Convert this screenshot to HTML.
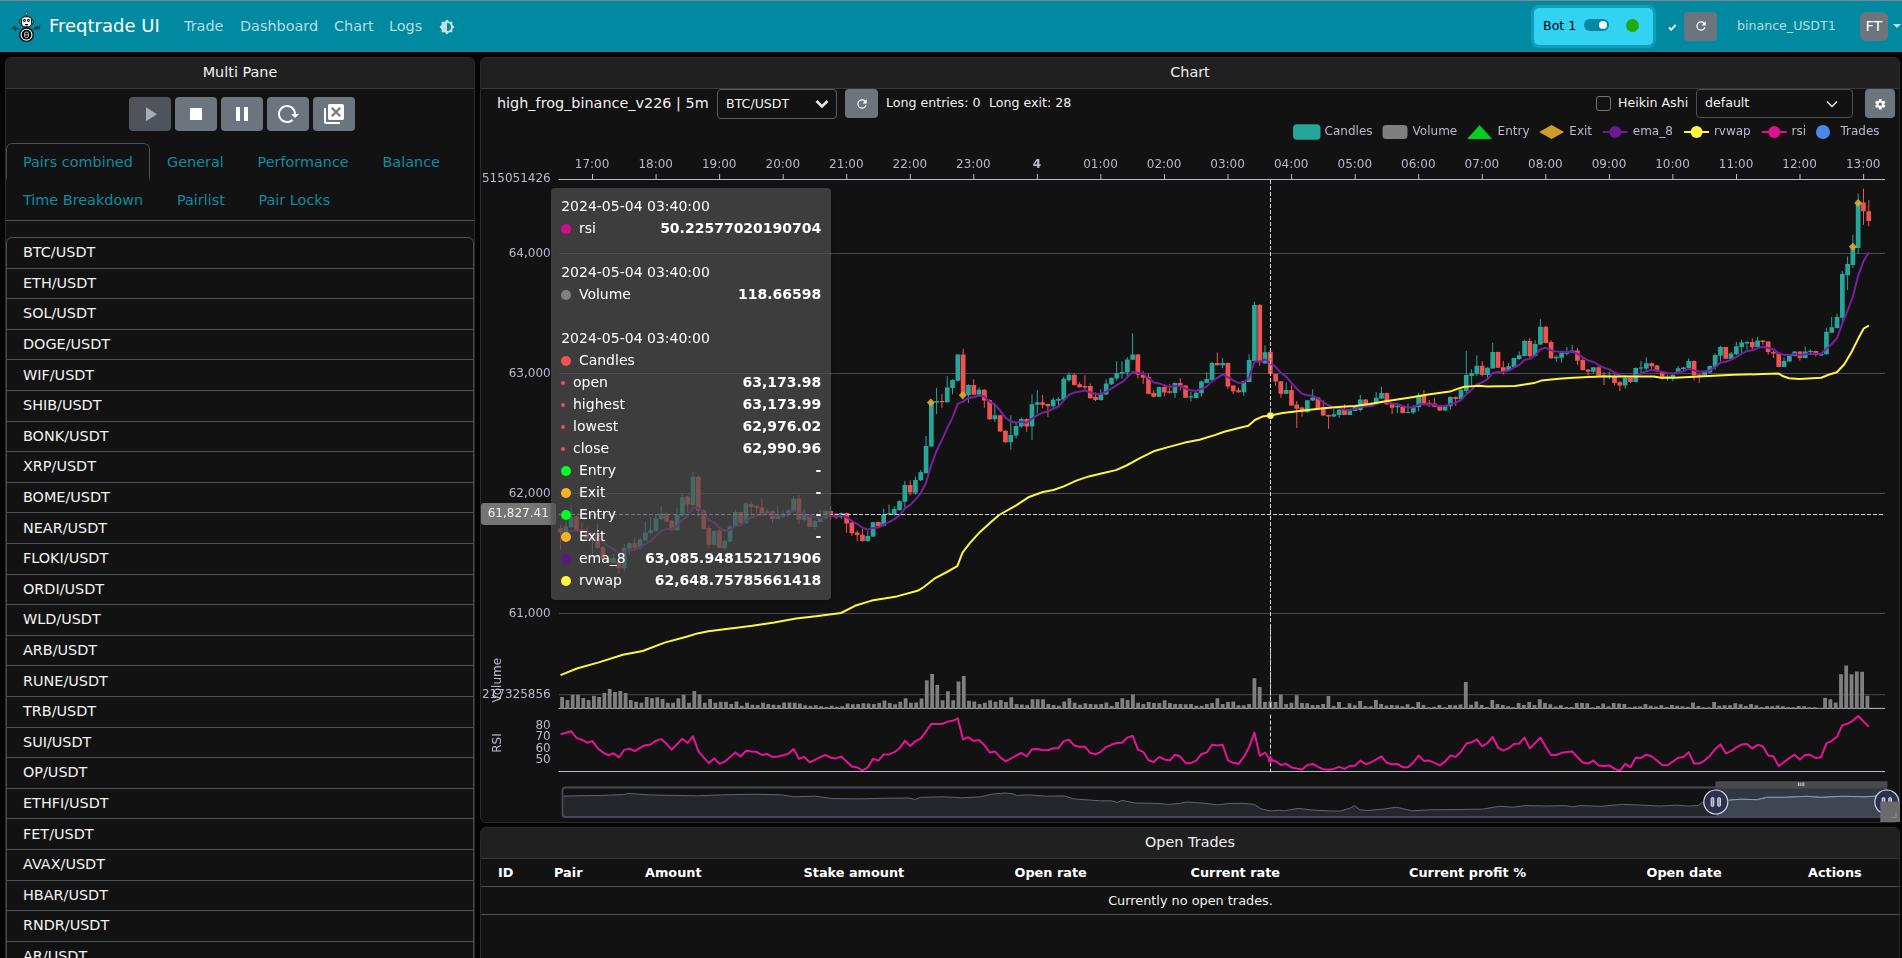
<!DOCTYPE html>
<html lang="en">
<head>
<meta charset="utf-8">
<title>freqUI</title>
<style>
*{box-sizing:border-box}
html,body{margin:0;padding:0}
body{width:1902px;height:958px;overflow:hidden;background:#050505;color:#f8f9fa;font-family:"DejaVu Sans","Liberation Sans",sans-serif;font-size:14.4px;line-height:1;position:relative}
.topline{position:absolute;left:0;top:0;width:1902px;height:1px;background:#848484}
.nav{position:absolute;left:0;top:1px;width:1902px;height:51px;background:#0089a1}
.t{position:absolute;white-space:nowrap;line-height:1}
.card{position:absolute;background:#121212;border:1px solid #2a2a2a;border-radius:6px;overflow:hidden}
.card .hd{position:absolute;left:0;top:0;right:0;height:31px;background:#202020;border-bottom:1px solid #3a3a3a}
</style>
</head>
<body>
<div class="topline"></div><div class="nav"></div>
<svg style="position:absolute;left:8px;top:8px" width="36" height="40" viewBox="8 8 36 40">
<g fill="none" stroke="#000" stroke-width="0.75" stroke-linecap="round" stroke-linejoin="round">
<path d="M12.3 28.3h1.3l.9-2.2.9 4.6 1.1-2.9.7.9h1.7"/>
<path d="M33.3 29.3h1.4l.8-2.3 1 2.1.9-3 1 3.3 1.1-.7.2-3"/>
</g>
<line x1="26.5" y1="14.6" x2="26.5" y2="17" stroke="#000" stroke-width="1"/>
<circle cx="26.5" cy="13.5" r="1.3" fill="#fff" stroke="#000" stroke-width="0.8"/>
<rect x="19.6" y="19.8" width="2.6" height="4" rx="0.9" fill="#8c8c8c" stroke="#000" stroke-width="0.7"/>
<rect x="30.8" y="19.8" width="2.6" height="4" rx="0.9" fill="#8c8c8c" stroke="#000" stroke-width="0.7"/>
<rect x="21.4" y="16.8" width="10.2" height="10" rx="3.3" fill="#fff" stroke="#000" stroke-width="1"/>
<circle cx="24.5" cy="20.5" r="1.4" fill="#000"/><circle cx="28.4" cy="20.5" r="1.4" fill="#000"/>
<circle cx="24.5" cy="20.5" r="0.55" fill="#ddd"/><circle cx="28.4" cy="20.5" r="0.55" fill="#ddd"/>
<path d="M24.6 24h3.8q-.4 1.5-1.9 1.5t-1.9-1.5z" fill="#000"/>
<circle cx="26.5" cy="34.7" r="6.7" fill="#fff" stroke="#000" stroke-width="1.3"/>
<circle cx="26.5" cy="34.7" r="4.9" fill="#000"/>
<rect x="24.7" y="32.1" width="3.6" height="5.3" rx="1" fill="none" stroke="#e8e8e8" stroke-width="0.9"/>
<line x1="24.7" y1="34.8" x2="28.3" y2="34.8" stroke="#e8e8e8" stroke-width="0.8"/>
</svg>
<span class="t" style="left:49.00px;top:17.27px;font-size:18px;color:#fff;">Freqtrade UI</span>
<span class="t" style="left:184.00px;top:18.82px;font-size:14.4px;color:rgba(255,255,255,.72);">Trade</span>
<span class="t" style="left:240.00px;top:18.82px;font-size:14.4px;color:rgba(255,255,255,.72);">Dashboard</span>
<span class="t" style="left:334.00px;top:18.82px;font-size:14.4px;color:rgba(255,255,255,.72);">Chart</span>
<span class="t" style="left:389.00px;top:18.82px;font-size:14.4px;color:rgba(255,255,255,.72);">Logs</span>
<svg style="position:absolute;left:439px;top:18.5px" width="16" height="16" viewBox="0 0 24 24"><path fill="rgba(255,255,255,.75)" d="M12,18V6A6,6 0 0,1 18,12A6,6 0 0,1 12,18M20,15.31L23.31,12L20,8.69V4H15.31L12,0.69L8.69,4H4V8.69L0.69,12L4,15.31V20H8.69L12,23.31L15.31,20H20V15.31Z"/></svg>
<div style="position:absolute;left:1534px;top:8px;width:119px;height:37px;border-radius:5px;background:#31d2f2;box-shadow:0 0 0 3px #0d9ebb"></div>
<span class="t" style="left:1543.00px;top:20.34px;font-size:12.6px;color:#000;">Bot 1</span>
<div style="position:absolute;left:1584px;top:18.5px;width:25px;height:12.6px;border-radius:7px;background:#0089a1"></div>
<div style="position:absolute;left:1598.5px;top:20.5px;width:8.6px;height:8.6px;border-radius:5px;background:#fff"></div>
<div style="position:absolute;left:1625.5px;top:18.5px;width:13px;height:13px;border-radius:7px;background:#1eab0b"></div>
<svg style="position:absolute;left:1667px;top:22px" width="10.5" height="10.5" viewBox="0 0 12 12"><path d="M2.3 6.3l2.6 2.6 5-5.6" fill="none" stroke="#fff" stroke-width="2.1"/></svg>
<div style="position:absolute;left:1684px;top:12px;width:33px;height:29px;border-radius:4px;background:#6c757d"></div>
<svg style="position:absolute;left:1693.5px;top:19px" width="14" height="14" viewBox="0 0 24 24"><path fill="#fff" d="M17.65,6.35C16.2,4.9 14.21,4 12,4A8,8 0 0,0 4,12A8,8 0 0,0 12,20C15.73,20 18.84,17.45 19.73,14H17.65C16.83,16.33 14.61,18 12,18A6,6 0 0,1 6,12A6,6 0 0,1 12,6C13.66,6 15.14,6.69 16.22,7.78L13,11H20V4L17.65,6.35Z"/></svg>
<span class="t" style="left:1737.00px;top:19.74px;font-size:12.6px;color:rgba(255,255,255,.72);">binance_USDT1</span>
<div style="position:absolute;left:1860px;top:12px;width:28px;height:29px;border-radius:6px;background:#6c757d"></div>
<span class="t" style="left:1374.00px;width:1000px;text-align:center;top:18.82px;font-size:14.4px;color:#fff;">FT</span>
<div style="position:absolute;left:1893px;top:24px;width:0;height:0;border-left:4px solid transparent;border-right:4px solid transparent;border-top:4px solid rgba(255,255,255,.75)"></div>
<div class="card" style="left:5px;top:57px;width:470px;height:920px;"><div class="hd"></div></div>
<span class="t" style="left:-260.00px;width:1000px;text-align:center;top:65.02px;font-size:14.4px;color:#f1f1f1;">Multi Pane</span>
<div class="card" style="left:480px;top:57px;width:1420px;height:766px;"><div class="hd"></div></div>
<span class="t" style="left:690.00px;width:1000px;text-align:center;top:65.02px;font-size:14.4px;color:#f1f1f1;">Chart</span>
<div class="card" style="left:480px;top:827px;width:1420px;height:150px;"><div class="hd"></div></div>
<span class="t" style="left:690.00px;width:1000px;text-align:center;top:835.02px;font-size:14.4px;color:#f1f1f1;">Open Trades</span>
<div style="position:absolute;left:129px;top:97px;width:42px;height:34px;border-radius:4px;background:#4e545b"></div>
<svg style="position:absolute;left:138px;top:102px" width="24" height="24" viewBox="0 0 24 24"><path fill="#a9acb0" d="M8,5.14V19.14L19,12.14L8,5.14Z"/></svg>
<div style="position:absolute;left:175px;top:97px;width:42px;height:34px;border-radius:4px;background:#6c757d"></div>
<svg style="position:absolute;left:184px;top:102px" width="24" height="24" viewBox="0 0 24 24"><path fill="#fff" d="M18,18H6V6H18V18Z"/></svg>
<div style="position:absolute;left:221px;top:97px;width:42px;height:34px;border-radius:4px;background:#6c757d"></div>
<svg style="position:absolute;left:230px;top:102px" width="24" height="24" viewBox="0 0 24 24"><path fill="#fff" d="M14,19H18V5H14M6,19H10V5H6V19Z"/></svg>
<div style="position:absolute;left:267px;top:97px;width:42px;height:34px;border-radius:4px;background:#6c757d"></div>
<svg style="position:absolute;left:276px;top:102px" width="24" height="24" viewBox="0 0 24 24"><path fill="#fff" d="M2 12C2 16.97 6.03 21 11 21C13.39 21 15.68 20.06 17.4 18.4L15.9 16.9C14.63 18.25 12.86 19 11 19C4.76 19 1.64 11.46 6.05 7.05C10.46 2.64 18 5.77 18 12H15L19 16H19.1L23 12H20C20 7.03 15.97 3 11 3C6.03 3 2 7.03 2 12Z"/></svg>
<div style="position:absolute;left:313px;top:97px;width:42px;height:34px;border-radius:4px;background:#6c757d"></div>
<svg style="position:absolute;left:322px;top:102px" width="24" height="24" viewBox="0 0 24 24"><path fill="#fff" d="M4 20H18V22H4C2.9 22 2 21.11 2 20V6H4V20M20.22 2H7.78C6.8 2 6 2.8 6 3.78V16.22C6 17.2 6.8 18 7.78 18H20.22C21.2 18 22 17.2 22 16.22V3.78C22 2.8 21.2 2 20.22 2M19 13.6L17.6 15L14 11.4L10.4 15L9 13.6L12.6 10L9 6.4L10.4 5L14 8.6L17.6 5L19 6.4L15.4 10L19 13.6Z"/></svg>
<div style="position:absolute;left:6px;top:143px;width:144px;height:39px;border:1px solid #495057;border-bottom:none;border-radius:6px 6px 0 0;-webkit-mask-image:linear-gradient(#000 80%,transparent);mask-image:linear-gradient(#000 85%,transparent)"></div>
<div style="position:absolute;left:6px;top:220px;width:468px;height:1px;background:#495057"></div>
<span class="t" style="left:23.00px;top:155.02px;font-size:14.4px;color:#0b8ca4;">Pairs combined</span>
<span class="t" style="left:167.00px;top:155.02px;font-size:14.4px;color:#0b8ca4;">General</span>
<span class="t" style="left:257.50px;top:155.02px;font-size:14.4px;color:#0b8ca4;">Performance</span>
<span class="t" style="left:382.50px;top:155.02px;font-size:14.4px;color:#0b8ca4;">Balance</span>
<span class="t" style="left:23.00px;top:192.62px;font-size:14.4px;color:#0b8ca4;">Time Breakdown</span>
<span class="t" style="left:177.00px;top:192.62px;font-size:14.4px;color:#0b8ca4;">Pairlist</span>
<span class="t" style="left:258.50px;top:192.62px;font-size:14.4px;color:#0b8ca4;">Pair Locks</span>
<div style="position:absolute;left:6px;top:237px;width:468px;height:760px;border:1px solid #495057;border-radius:6px 6px 0 0"></div>
<span class="t" style="left:23.00px;top:245.12px;font-size:14.4px;color:#f4f4f4;">BTC/USDT</span>
<div style="position:absolute;left:7px;top:267.6px;width:466px;height:1px;background:#495057"></div>
<span class="t" style="left:23.00px;top:275.72px;font-size:14.4px;color:#f4f4f4;">ETH/USDT</span>
<div style="position:absolute;left:7px;top:298.2px;width:466px;height:1px;background:#495057"></div>
<span class="t" style="left:23.00px;top:306.32px;font-size:14.4px;color:#f4f4f4;">SOL/USDT</span>
<div style="position:absolute;left:7px;top:328.8px;width:466px;height:1px;background:#495057"></div>
<span class="t" style="left:23.00px;top:336.92px;font-size:14.4px;color:#f4f4f4;">DOGE/USDT</span>
<div style="position:absolute;left:7px;top:359.4px;width:466px;height:1px;background:#495057"></div>
<span class="t" style="left:23.00px;top:367.52px;font-size:14.4px;color:#f4f4f4;">WIF/USDT</span>
<div style="position:absolute;left:7px;top:390.0px;width:466px;height:1px;background:#495057"></div>
<span class="t" style="left:23.00px;top:398.12px;font-size:14.4px;color:#f4f4f4;">SHIB/USDT</span>
<div style="position:absolute;left:7px;top:420.6px;width:466px;height:1px;background:#495057"></div>
<span class="t" style="left:23.00px;top:428.72px;font-size:14.4px;color:#f4f4f4;">BONK/USDT</span>
<div style="position:absolute;left:7px;top:451.2px;width:466px;height:1px;background:#495057"></div>
<span class="t" style="left:23.00px;top:459.32px;font-size:14.4px;color:#f4f4f4;">XRP/USDT</span>
<div style="position:absolute;left:7px;top:481.8px;width:466px;height:1px;background:#495057"></div>
<span class="t" style="left:23.00px;top:489.92px;font-size:14.4px;color:#f4f4f4;">BOME/USDT</span>
<div style="position:absolute;left:7px;top:512.4px;width:466px;height:1px;background:#495057"></div>
<span class="t" style="left:23.00px;top:520.52px;font-size:14.4px;color:#f4f4f4;">NEAR/USDT</span>
<div style="position:absolute;left:7px;top:543.0px;width:466px;height:1px;background:#495057"></div>
<span class="t" style="left:23.00px;top:551.12px;font-size:14.4px;color:#f4f4f4;">FLOKI/USDT</span>
<div style="position:absolute;left:7px;top:573.6px;width:466px;height:1px;background:#495057"></div>
<span class="t" style="left:23.00px;top:581.72px;font-size:14.4px;color:#f4f4f4;">ORDI/USDT</span>
<div style="position:absolute;left:7px;top:604.2px;width:466px;height:1px;background:#495057"></div>
<span class="t" style="left:23.00px;top:612.32px;font-size:14.4px;color:#f4f4f4;">WLD/USDT</span>
<div style="position:absolute;left:7px;top:634.8px;width:466px;height:1px;background:#495057"></div>
<span class="t" style="left:23.00px;top:642.92px;font-size:14.4px;color:#f4f4f4;">ARB/USDT</span>
<div style="position:absolute;left:7px;top:665.4px;width:466px;height:1px;background:#495057"></div>
<span class="t" style="left:23.00px;top:673.52px;font-size:14.4px;color:#f4f4f4;">RUNE/USDT</span>
<div style="position:absolute;left:7px;top:696.0px;width:466px;height:1px;background:#495057"></div>
<span class="t" style="left:23.00px;top:704.12px;font-size:14.4px;color:#f4f4f4;">TRB/USDT</span>
<div style="position:absolute;left:7px;top:726.6px;width:466px;height:1px;background:#495057"></div>
<span class="t" style="left:23.00px;top:734.72px;font-size:14.4px;color:#f4f4f4;">SUI/USDT</span>
<div style="position:absolute;left:7px;top:757.2px;width:466px;height:1px;background:#495057"></div>
<span class="t" style="left:23.00px;top:765.32px;font-size:14.4px;color:#f4f4f4;">OP/USDT</span>
<div style="position:absolute;left:7px;top:787.8px;width:466px;height:1px;background:#495057"></div>
<span class="t" style="left:23.00px;top:795.92px;font-size:14.4px;color:#f4f4f4;">ETHFI/USDT</span>
<div style="position:absolute;left:7px;top:818.4px;width:466px;height:1px;background:#495057"></div>
<span class="t" style="left:23.00px;top:826.52px;font-size:14.4px;color:#f4f4f4;">FET/USDT</span>
<div style="position:absolute;left:7px;top:849.0px;width:466px;height:1px;background:#495057"></div>
<span class="t" style="left:23.00px;top:857.12px;font-size:14.4px;color:#f4f4f4;">AVAX/USDT</span>
<div style="position:absolute;left:7px;top:879.6px;width:466px;height:1px;background:#495057"></div>
<span class="t" style="left:23.00px;top:887.72px;font-size:14.4px;color:#f4f4f4;">HBAR/USDT</span>
<div style="position:absolute;left:7px;top:910.2px;width:466px;height:1px;background:#495057"></div>
<span class="t" style="left:23.00px;top:918.32px;font-size:14.4px;color:#f4f4f4;">RNDR/USDT</span>
<div style="position:absolute;left:7px;top:940.8px;width:466px;height:1px;background:#495057"></div>
<span class="t" style="left:23.00px;top:948.92px;font-size:14.4px;color:#f4f4f4;">AR/USDT</span>
<span class="t" style="left:497.00px;top:95.82px;font-size:14.4px;color:#f1f1f1;">high_frog_binance_v226 | 5m</span>
<div style="position:absolute;left:717px;top:89px;width:120px;height:30px;border:1px solid #5a5f64;border-radius:4px;background:#121212"></div>
<span class="t" style="left:726.00px;top:97.94px;font-size:12.6px;color:#f1f1f1;">BTC/USDT</span>
<svg style="position:absolute;left:814px;top:97px" width="16" height="14" viewBox="0 0 16 14"><path d="M2.5 4l5.5 5.5L13.5 4" fill="none" stroke="#e8e8e8" stroke-width="2.6"/></svg>
<div style="position:absolute;left:845px;top:89px;width:33px;height:29px;border-radius:4px;background:#6c757d"></div>
<svg style="position:absolute;left:854.5px;top:96.5px" width="14" height="14" viewBox="0 0 24 24"><path fill="#fff" d="M17.65,6.35C16.2,4.9 14.21,4 12,4A8,8 0 0,0 4,12A8,8 0 0,0 12,20C15.73,20 18.84,17.45 19.73,14H17.65C16.83,16.33 14.61,18 12,18A6,6 0 0,1 6,12A6,6 0 0,1 12,6C13.66,6 15.14,6.69 16.22,7.78L13,11H20V4L17.65,6.35Z"/></svg>
<span class="t" style="left:886.00px;top:97.24px;font-size:12.6px;color:#f1f1f1;">Long entries: 0</span>
<span class="t" style="left:989.00px;top:97.24px;font-size:12.6px;color:#f1f1f1;">Long exit: 28</span>
<div style="position:absolute;left:1596px;top:96px;width:14.5px;height:14.5px;border:1px solid #70757a;border-radius:3px;background:#121212"></div>
<span class="t" style="left:1618.00px;top:97.34px;font-size:12.6px;color:#f1f1f1;">Heikin Ashi</span>
<div style="position:absolute;left:1696px;top:89px;width:157px;height:29px;border:1px solid #4a4f54;border-radius:4px;background:#121212"></div>
<span class="t" style="left:1705.00px;top:97.34px;font-size:12.6px;color:#f1f1f1;">default</span>
<svg style="position:absolute;left:1824px;top:97px" width="16" height="14" viewBox="0 0 16 14"><path d="M3 4.5l5 5 5-5" fill="none" stroke="#e8e8e8" stroke-width="1.5"/></svg>
<div style="position:absolute;left:1865px;top:89px;width:30px;height:29px;border-radius:4px;background:#6c757d"></div>
<svg style="position:absolute;left:1873.5px;top:97.5px" width="12.5" height="12.5" viewBox="0 0 24 24"><path fill="#fff" d="M12,15.5A3.5,3.5 0 0,1 8.5,12A3.5,3.5 0 0,1 12,8.5A3.5,3.5 0 0,1 15.5,12A3.5,3.5 0 0,1 12,15.5M19.43,12.97C19.47,12.65 19.5,12.33 19.5,12C19.5,11.67 19.47,11.34 19.43,11L21.54,9.37C21.73,9.22 21.78,8.95 21.66,8.73L19.66,5.27C19.54,5.05 19.27,4.96 19.05,5.05L16.56,6.05C16.04,5.66 15.5,5.32 14.87,5.07L14.5,2.42C14.46,2.18 14.25,2 14,2H10C9.75,2 9.54,2.18 9.5,2.42L9.13,5.07C8.5,5.32 7.96,5.66 7.44,6.05L4.95,5.05C4.73,4.96 4.46,5.05 4.34,5.27L2.34,8.73C2.21,8.95 2.27,9.22 2.46,9.37L4.57,11C4.53,11.34 4.5,11.67 4.5,12C4.5,12.33 4.53,12.65 4.57,12.97L2.46,14.63C2.27,14.78 2.21,15.05 2.34,15.27L4.34,18.73C4.46,18.95 4.73,19.03 4.95,18.95L7.44,17.94C7.96,18.34 8.5,18.68 9.13,18.93L9.5,21.58C9.54,21.82 9.75,22 10,22H14C14.25,22 14.46,21.82 14.5,21.58L14.87,18.93C15.5,18.67 16.04,18.34 16.56,17.94L19.05,18.95C19.27,19.03 19.54,18.95 19.66,18.73L21.66,15.27C21.78,15.05 21.73,14.78 21.54,14.63L19.43,12.97Z"/></svg>
<div style="position:absolute;left:481px;top:886px;width:1418px;height:1px;background:#495057"></div>
<div style="position:absolute;left:481px;top:914px;width:1418px;height:1px;background:#495057"></div>
<span class="t" style="left:498.00px;top:867.13px;font-size:12.85px;color:#fff;font-weight:bold;">ID</span>
<span class="t" style="left:554.00px;top:867.13px;font-size:12.85px;color:#fff;font-weight:bold;">Pair</span>
<span class="t" style="left:645.00px;top:867.13px;font-size:12.85px;color:#fff;font-weight:bold;">Amount</span>
<span class="t" style="left:803.50px;top:867.13px;font-size:12.85px;color:#fff;font-weight:bold;">Stake amount</span>
<span class="t" style="left:1014.50px;top:867.13px;font-size:12.85px;color:#fff;font-weight:bold;">Open rate</span>
<span class="t" style="left:1190.50px;top:867.13px;font-size:12.85px;color:#fff;font-weight:bold;">Current rate</span>
<span class="t" style="left:1409.00px;top:867.13px;font-size:12.85px;color:#fff;font-weight:bold;">Current profit %</span>
<span class="t" style="left:1646.50px;top:867.13px;font-size:12.85px;color:#fff;font-weight:bold;">Open date</span>
<span class="t" style="left:1808.00px;top:867.13px;font-size:12.85px;color:#fff;font-weight:bold;">Actions</span>
<span class="t" style="left:690.50px;width:1000px;text-align:center;top:895.13px;font-size:12.85px;color:#f1f1f1;">Currently no open trades.</span>
<div style="position:absolute;left:481px;top:120px;width:1419px;height:702px;overflow:hidden;will-change:transform">
<svg width="1419" height="702" viewBox="481 120 1419 702" style="position:absolute;left:0;top:0;font-family:'DejaVu Sans','Liberation Sans',sans-serif;font-size:12px">
<rect x="1293" y="124.3" width="27.5" height="15.4" rx="4" fill="#26a69a"/>
<rect x="1382.5" y="125" width="25" height="14" rx="3.5" fill="#7f7f7f"/>
<path d="M1479.6 125l12.5 14h-25z" fill="#03cc22"/>
<path d="M1551.6 125l12.5 7-12.5 7-12.5-7z" fill="#d19d28"/>
<line x1="1602.8" y1="132" x2="1627.8" y2="132" stroke="#6a1b8f" stroke-width="2"/><circle cx="1615.3" cy="132" r="6" fill="#6a1b8f"/>
<line x1="1684.1" y1="132" x2="1709.1" y2="132" stroke="#fff53d" stroke-width="2"/><circle cx="1696.6" cy="132" r="6" fill="#fff53d"/>
<line x1="1761.8" y1="132" x2="1786.8" y2="132" stroke="#e0118f" stroke-width="2"/><circle cx="1774.3" cy="132" r="6" fill="#e0118f"/>
<circle cx="1823" cy="132" r="7" fill="#4a89e8"/>
<text x="1324.6" y="135.1" fill="#b9b8ce">Candles</text>
<text x="1412.6" y="135.1" fill="#b9b8ce">Volume</text>
<text x="1497.6" y="135.1" fill="#b9b8ce">Entry</text>
<text x="1569.3" y="135.1" fill="#b9b8ce">Exit</text>
<text x="1632.8" y="135.1" fill="#b9b8ce">ema_8</text>
<text x="1713.9" y="135.1" fill="#b9b8ce">rvwap</text>
<text x="1791.6" y="135.1" fill="#b9b8ce">rsi</text>
<text x="1840.5" y="135.1" fill="#b9b8ce">Trades</text>
<line x1="559" y1="253.5" x2="1885" y2="253.5" stroke="#484753" stroke-width="1"/>
<line x1="559" y1="373.5" x2="1885" y2="373.5" stroke="#484753" stroke-width="1"/>
<line x1="559" y1="493.5" x2="1885" y2="493.5" stroke="#484753" stroke-width="1"/>
<line x1="559" y1="613.5" x2="1885" y2="613.5" stroke="#484753" stroke-width="1"/>
<line x1="559" y1="694.7" x2="1885" y2="694.7" stroke="#484753" stroke-width="1"/>
<line x1="558.5" y1="179.5" x2="1885" y2="179.5" stroke="#b9b8ce" stroke-width="1"/>
<line x1="592.5" y1="174" x2="592.5" y2="179.5" stroke="#b9b8ce" stroke-width="1"/>
<text x="592.1" y="168.1" text-anchor="middle" fill="#b9b8ce">17:00</text>
<line x1="656.1" y1="174" x2="656.1" y2="179.5" stroke="#b9b8ce" stroke-width="1"/>
<text x="655.7" y="168.1" text-anchor="middle" fill="#b9b8ce">18:00</text>
<line x1="719.6" y1="174" x2="719.6" y2="179.5" stroke="#b9b8ce" stroke-width="1"/>
<text x="719.2" y="168.1" text-anchor="middle" fill="#b9b8ce">19:00</text>
<line x1="783.2" y1="174" x2="783.2" y2="179.5" stroke="#b9b8ce" stroke-width="1"/>
<text x="782.8" y="168.1" text-anchor="middle" fill="#b9b8ce">20:00</text>
<line x1="846.7" y1="174" x2="846.7" y2="179.5" stroke="#b9b8ce" stroke-width="1"/>
<text x="846.3" y="168.1" text-anchor="middle" fill="#b9b8ce">21:00</text>
<line x1="910.3" y1="174" x2="910.3" y2="179.5" stroke="#b9b8ce" stroke-width="1"/>
<text x="909.9" y="168.1" text-anchor="middle" fill="#b9b8ce">22:00</text>
<line x1="973.8" y1="174" x2="973.8" y2="179.5" stroke="#b9b8ce" stroke-width="1"/>
<text x="973.4" y="168.1" text-anchor="middle" fill="#b9b8ce">23:00</text>
<line x1="1037.4" y1="174" x2="1037.4" y2="179.5" stroke="#b9b8ce" stroke-width="1"/>
<text x="1037.0" y="168.1" text-anchor="middle" fill="#b9b8ce" font-weight="bold">4</text>
<line x1="1100.9" y1="174" x2="1100.9" y2="179.5" stroke="#b9b8ce" stroke-width="1"/>
<text x="1100.5" y="168.1" text-anchor="middle" fill="#b9b8ce">01:00</text>
<line x1="1164.5" y1="174" x2="1164.5" y2="179.5" stroke="#b9b8ce" stroke-width="1"/>
<text x="1164.1" y="168.1" text-anchor="middle" fill="#b9b8ce">02:00</text>
<line x1="1228.0" y1="174" x2="1228.0" y2="179.5" stroke="#b9b8ce" stroke-width="1"/>
<text x="1227.6" y="168.1" text-anchor="middle" fill="#b9b8ce">03:00</text>
<line x1="1291.6" y1="174" x2="1291.6" y2="179.5" stroke="#b9b8ce" stroke-width="1"/>
<text x="1291.2" y="168.1" text-anchor="middle" fill="#b9b8ce">04:00</text>
<line x1="1355.2" y1="174" x2="1355.2" y2="179.5" stroke="#b9b8ce" stroke-width="1"/>
<text x="1354.8" y="168.1" text-anchor="middle" fill="#b9b8ce">05:00</text>
<line x1="1418.7" y1="174" x2="1418.7" y2="179.5" stroke="#b9b8ce" stroke-width="1"/>
<text x="1418.3" y="168.1" text-anchor="middle" fill="#b9b8ce">06:00</text>
<line x1="1482.3" y1="174" x2="1482.3" y2="179.5" stroke="#b9b8ce" stroke-width="1"/>
<text x="1481.9" y="168.1" text-anchor="middle" fill="#b9b8ce">07:00</text>
<line x1="1545.8" y1="174" x2="1545.8" y2="179.5" stroke="#b9b8ce" stroke-width="1"/>
<text x="1545.4" y="168.1" text-anchor="middle" fill="#b9b8ce">08:00</text>
<line x1="1609.4" y1="174" x2="1609.4" y2="179.5" stroke="#b9b8ce" stroke-width="1"/>
<text x="1609.0" y="168.1" text-anchor="middle" fill="#b9b8ce">09:00</text>
<line x1="1672.9" y1="174" x2="1672.9" y2="179.5" stroke="#b9b8ce" stroke-width="1"/>
<text x="1672.5" y="168.1" text-anchor="middle" fill="#b9b8ce">10:00</text>
<line x1="1736.5" y1="174" x2="1736.5" y2="179.5" stroke="#b9b8ce" stroke-width="1"/>
<text x="1736.1" y="168.1" text-anchor="middle" fill="#b9b8ce">11:00</text>
<line x1="1800.0" y1="174" x2="1800.0" y2="179.5" stroke="#b9b8ce" stroke-width="1"/>
<text x="1799.6" y="168.1" text-anchor="middle" fill="#b9b8ce">12:00</text>
<line x1="1863.6" y1="174" x2="1863.6" y2="179.5" stroke="#b9b8ce" stroke-width="1"/>
<text x="1863.2" y="168.1" text-anchor="middle" fill="#b9b8ce">13:00</text>
<text x="550.7" y="181.9" text-anchor="end" fill="#b9b8ce">64,627.515051426</text>
<text x="550.7" y="257" text-anchor="end" fill="#b9b8ce">64,000</text>
<text x="550.7" y="377" text-anchor="end" fill="#b9b8ce">63,000</text>
<text x="550.7" y="497" text-anchor="end" fill="#b9b8ce">62,000</text>
<text x="550.7" y="617" text-anchor="end" fill="#b9b8ce">61,000</text>
<text x="550.7" y="698.4" text-anchor="end" fill="#b9b8ce">60,318.217325856</text>
<text x="550.7" y="729.2" text-anchor="end" fill="#b9b8ce">80</text>
<text x="550.7" y="740.4" text-anchor="end" fill="#b9b8ce">70</text>
<text x="550.7" y="752.1" text-anchor="end" fill="#b9b8ce">60</text>
<text x="550.7" y="763.1" text-anchor="end" fill="#b9b8ce">50</text>
<text transform="translate(501.3,680.2) rotate(-90)" text-anchor="middle" fill="#b9b8ce">Volume</text>
<text transform="translate(500.6,743) rotate(-90)" text-anchor="middle" fill="#b9b8ce">RSI</text>
<line x1="558.5" y1="708.4" x2="1885" y2="708.4" stroke="#b9b8ce" stroke-width="1"/>
<path d="M560.2 697.0h3.8V708.7h-3.8zM565.5 699.9h3.8V708.7h-3.8zM570.8 694.8h3.8V708.7h-3.8zM576.1 694.8h3.8V708.7h-3.8zM581.4 698.0h3.8V708.7h-3.8zM586.7 699.9h3.8V708.7h-3.8zM592.0 695.8h3.8V708.7h-3.8zM597.2 697.0h3.8V708.7h-3.8zM602.5 692.9h3.8V708.7h-3.8zM607.8 689.0h3.8V708.7h-3.8zM613.1 691.9h3.8V708.7h-3.8zM618.4 690.9h3.8V708.7h-3.8zM623.7 692.9h3.8V708.7h-3.8zM628.9 699.9h3.8V708.7h-3.8zM634.2 701.8h3.8V708.7h-3.8zM639.5 702.8h3.8V708.7h-3.8zM644.8 697.0h3.8V708.7h-3.8zM650.1 698.2h3.8V708.7h-3.8zM655.4 697.3h3.8V708.7h-3.8zM660.7 698.9h3.8V708.7h-3.8zM665.9 702.8h3.8V708.7h-3.8zM671.2 702.8h3.8V708.7h-3.8zM676.5 698.2h3.8V708.7h-3.8zM681.8 694.8h3.8V708.7h-3.8zM687.1 702.8h3.8V708.7h-3.8zM692.4 690.9h3.8V708.7h-3.8zM697.6 694.5h3.8V708.7h-3.8zM702.9 702.8h3.8V708.7h-3.8zM708.2 698.9h3.8V708.7h-3.8zM713.5 702.8h3.8V708.7h-3.8zM718.8 701.8h3.8V708.7h-3.8zM724.1 701.8h3.8V708.7h-3.8zM729.3 704.0h3.8V708.7h-3.8zM734.6 701.4h3.8V708.7h-3.8zM739.9 705.8h3.8V708.7h-3.8zM745.2 702.8h3.8V708.7h-3.8zM750.5 704.7h3.8V708.7h-3.8zM755.8 705.0h3.8V708.7h-3.8zM761.1 702.8h3.8V708.7h-3.8zM766.3 703.9h3.8V708.7h-3.8zM771.6 704.7h3.8V708.7h-3.8zM776.9 705.0h3.8V708.7h-3.8zM782.2 702.4h3.8V708.7h-3.8zM787.5 702.4h3.8V708.7h-3.8zM792.8 702.8h3.8V708.7h-3.8zM798.0 703.6h3.8V708.7h-3.8zM803.3 705.3h3.8V708.7h-3.8zM808.6 705.8h3.8V708.7h-3.8zM813.9 705.3h3.8V708.7h-3.8zM819.2 706.2h3.8V708.7h-3.8zM824.5 706.9h3.8V708.7h-3.8zM829.8 705.8h3.8V708.7h-3.8zM835.0 706.8h3.8V708.7h-3.8zM840.3 706.2h3.8V708.7h-3.8zM845.6 703.6h3.8V708.7h-3.8zM850.9 704.3h3.8V708.7h-3.8zM856.2 704.0h3.8V708.7h-3.8zM861.5 703.3h3.8V708.7h-3.8zM866.7 703.6h3.8V708.7h-3.8zM872.0 704.0h3.8V708.7h-3.8zM877.3 703.1h3.8V708.7h-3.8zM882.6 700.4h3.8V708.7h-3.8zM887.9 703.1h3.8V708.7h-3.8zM893.2 704.3h3.8V708.7h-3.8zM898.4 701.7h3.8V708.7h-3.8zM903.7 698.2h3.8V708.7h-3.8zM909.0 702.8h3.8V708.7h-3.8zM914.3 702.4h3.8V708.7h-3.8zM919.6 698.5h3.8V708.7h-3.8zM924.9 680.2h3.8V708.7h-3.8zM930.2 674.1h3.8V708.7h-3.8zM935.4 685.0h3.8V708.7h-3.8zM940.7 700.2h3.8V708.7h-3.8zM946.0 691.2h3.8V708.7h-3.8zM951.3 700.2h3.8V708.7h-3.8zM956.6 681.4h3.8V708.7h-3.8zM961.9 676.1h3.8V708.7h-3.8zM967.1 700.7h3.8V708.7h-3.8zM972.4 701.4h3.8V708.7h-3.8zM977.7 704.0h3.8V708.7h-3.8zM983.0 702.8h3.8V708.7h-3.8zM988.3 700.2h3.8V708.7h-3.8zM993.6 701.8h3.8V708.7h-3.8zM998.9 699.9h3.8V708.7h-3.8zM1004.1 702.1h3.8V708.7h-3.8zM1009.4 697.3h3.8V708.7h-3.8zM1014.7 704.0h3.8V708.7h-3.8zM1020.0 704.6h3.8V708.7h-3.8zM1025.3 705.0h3.8V708.7h-3.8zM1030.6 699.2h3.8V708.7h-3.8zM1035.8 699.2h3.8V708.7h-3.8zM1041.1 699.2h3.8V708.7h-3.8zM1046.4 704.0h3.8V708.7h-3.8zM1051.7 705.0h3.8V708.7h-3.8zM1057.0 705.8h3.8V708.7h-3.8zM1062.3 701.4h3.8V708.7h-3.8zM1067.5 698.2h3.8V708.7h-3.8zM1072.8 702.8h3.8V708.7h-3.8zM1078.1 704.7h3.8V708.7h-3.8zM1083.4 703.3h3.8V708.7h-3.8zM1088.7 704.0h3.8V708.7h-3.8zM1094.0 704.3h3.8V708.7h-3.8zM1099.3 703.9h3.8V708.7h-3.8zM1104.5 702.4h3.8V708.7h-3.8zM1109.8 706.1h3.8V708.7h-3.8zM1115.1 702.1h3.8V708.7h-3.8zM1120.4 698.2h3.8V708.7h-3.8zM1125.7 699.9h3.8V708.7h-3.8zM1131.0 694.4h3.8V708.7h-3.8zM1136.2 702.8h3.8V708.7h-3.8zM1141.5 703.9h3.8V708.7h-3.8zM1146.8 702.1h3.8V708.7h-3.8zM1152.1 703.1h3.8V708.7h-3.8zM1157.4 703.1h3.8V708.7h-3.8zM1162.7 700.2h3.8V708.7h-3.8zM1168.0 703.1h3.8V708.7h-3.8zM1173.2 704.0h3.8V708.7h-3.8zM1178.5 704.0h3.8V708.7h-3.8zM1183.8 704.3h3.8V708.7h-3.8zM1189.1 704.0h3.8V708.7h-3.8zM1194.4 705.8h3.8V708.7h-3.8zM1199.7 705.8h3.8V708.7h-3.8zM1204.9 703.9h3.8V708.7h-3.8zM1210.2 703.1h3.8V708.7h-3.8zM1215.5 698.2h3.8V708.7h-3.8zM1220.8 704.0h3.8V708.7h-3.8zM1226.1 702.1h3.8V708.7h-3.8zM1231.4 701.4h3.8V708.7h-3.8zM1236.6 705.3h3.8V708.7h-3.8zM1241.9 705.3h3.8V708.7h-3.8zM1247.2 704.0h3.8V708.7h-3.8zM1252.5 678.3h3.8V708.7h-3.8zM1257.8 687.1h3.8V708.7h-3.8zM1263.1 702.1h3.8V708.7h-3.8zM1268.4 701.4h3.8V708.7h-3.8zM1273.6 702.1h3.8V708.7h-3.8zM1278.9 694.4h3.8V708.7h-3.8zM1284.2 703.9h3.8V708.7h-3.8zM1289.5 702.8h3.8V708.7h-3.8zM1294.8 695.2h3.8V708.7h-3.8zM1300.1 703.1h3.8V708.7h-3.8zM1305.3 703.3h3.8V708.7h-3.8zM1310.6 705.0h3.8V708.7h-3.8zM1315.9 705.0h3.8V708.7h-3.8zM1321.2 704.0h3.8V708.7h-3.8zM1326.5 696.0h3.8V708.7h-3.8zM1331.8 706.1h3.8V708.7h-3.8zM1337.1 702.1h3.8V708.7h-3.8zM1342.3 707.2h3.8V708.7h-3.8zM1347.6 703.3h3.8V708.7h-3.8zM1352.9 705.3h3.8V708.7h-3.8zM1358.2 701.1h3.8V708.7h-3.8zM1363.5 706.1h3.8V708.7h-3.8zM1368.8 706.2h3.8V708.7h-3.8zM1374.0 699.9h3.8V708.7h-3.8zM1379.3 704.0h3.8V708.7h-3.8zM1384.6 705.5h3.8V708.7h-3.8zM1389.9 705.0h3.8V708.7h-3.8zM1395.2 705.3h3.8V708.7h-3.8zM1400.5 706.2h3.8V708.7h-3.8zM1405.7 704.3h3.8V708.7h-3.8zM1411.0 706.8h3.8V708.7h-3.8zM1416.3 702.1h3.8V708.7h-3.8zM1421.6 705.0h3.8V708.7h-3.8zM1426.9 707.2h3.8V708.7h-3.8zM1432.2 706.8h3.8V708.7h-3.8zM1437.5 705.0h3.8V708.7h-3.8zM1442.7 707.2h3.8V708.7h-3.8zM1448.0 705.0h3.8V708.7h-3.8zM1453.3 705.3h3.8V708.7h-3.8zM1458.6 704.6h3.8V708.7h-3.8zM1463.9 682.1h3.8V708.7h-3.8zM1469.2 704.7h3.8V708.7h-3.8zM1474.4 701.4h3.8V708.7h-3.8zM1479.7 705.0h3.8V708.7h-3.8zM1485.0 706.9h3.8V708.7h-3.8zM1490.3 699.9h3.8V708.7h-3.8zM1495.6 703.9h3.8V708.7h-3.8zM1500.9 705.0h3.8V708.7h-3.8zM1506.2 706.2h3.8V708.7h-3.8zM1511.4 707.2h3.8V708.7h-3.8zM1516.7 703.1h3.8V708.7h-3.8zM1522.0 705.0h3.8V708.7h-3.8zM1527.3 702.1h3.8V708.7h-3.8zM1532.6 705.0h3.8V708.7h-3.8zM1537.9 699.2h3.8V708.7h-3.8zM1543.1 703.1h3.8V708.7h-3.8zM1548.4 704.3h3.8V708.7h-3.8zM1553.7 706.5h3.8V708.7h-3.8zM1559.0 705.3h3.8V708.7h-3.8zM1564.3 706.9h3.8V708.7h-3.8zM1569.6 706.9h3.8V708.7h-3.8zM1574.8 703.1h3.8V708.7h-3.8zM1580.1 703.1h3.8V708.7h-3.8zM1585.4 703.3h3.8V708.7h-3.8zM1590.7 707.2h3.8V708.7h-3.8zM1596.0 706.1h3.8V708.7h-3.8zM1601.3 703.6h3.8V708.7h-3.8zM1606.6 706.2h3.8V708.7h-3.8zM1611.8 703.1h3.8V708.7h-3.8zM1617.1 703.6h3.8V708.7h-3.8zM1622.4 704.0h3.8V708.7h-3.8zM1627.7 707.2h3.8V708.7h-3.8zM1633.0 706.5h3.8V708.7h-3.8zM1638.3 706.2h3.8V708.7h-3.8zM1643.5 704.0h3.8V708.7h-3.8zM1648.8 705.8h3.8V708.7h-3.8zM1654.1 706.5h3.8V708.7h-3.8zM1659.4 705.3h3.8V708.7h-3.8zM1664.7 706.9h3.8V708.7h-3.8zM1670.0 705.0h3.8V708.7h-3.8zM1675.2 705.8h3.8V708.7h-3.8zM1680.5 706.2h3.8V708.7h-3.8zM1685.8 706.8h3.8V708.7h-3.8zM1691.1 702.4h3.8V708.7h-3.8zM1696.4 706.1h3.8V708.7h-3.8zM1701.7 707.2h3.8V708.7h-3.8zM1707.0 707.2h3.8V708.7h-3.8zM1712.2 702.1h3.8V708.7h-3.8zM1717.5 705.8h3.8V708.7h-3.8zM1722.8 705.3h3.8V708.7h-3.8zM1728.1 705.3h3.8V708.7h-3.8zM1733.4 703.3h3.8V708.7h-3.8zM1738.7 704.3h3.8V708.7h-3.8zM1743.9 706.1h3.8V708.7h-3.8zM1749.2 703.9h3.8V708.7h-3.8zM1754.5 705.3h3.8V708.7h-3.8zM1759.8 706.9h3.8V708.7h-3.8zM1765.1 706.1h3.8V708.7h-3.8zM1770.4 706.2h3.8V708.7h-3.8zM1775.7 705.5h3.8V708.7h-3.8zM1780.9 706.2h3.8V708.7h-3.8zM1786.2 707.2h3.8V708.7h-3.8zM1791.5 707.2h3.8V708.7h-3.8zM1796.8 706.1h3.8V708.7h-3.8zM1802.1 706.2h3.8V708.7h-3.8zM1807.4 707.2h3.8V708.7h-3.8zM1812.6 707.2h3.8V708.7h-3.8zM1817.9 708.0h3.8V708.7h-3.8zM1823.2 697.7h3.8V708.7h-3.8zM1828.5 699.2h3.8V708.7h-3.8zM1833.8 702.4h3.8V708.7h-3.8zM1839.1 674.3h3.8V708.7h-3.8zM1844.3 665.6h3.8V708.7h-3.8zM1849.6 674.3h3.8V708.7h-3.8zM1854.9 671.4h3.8V708.7h-3.8zM1860.2 671.7h3.8V708.7h-3.8zM1865.5 695.8h3.8V708.7h-3.8z" fill="#7f7f7f"/>
<path d="M565.9 520.7V533.1M571.2 506.1V528.0M592.4 536.8V553.6M613.6 553.6V563.5M624.2 544.1V571.8M629.5 541.9V555.0M640.0 538.2V549.2M645.3 521.4V541.1M650.6 517.0V534.6M655.9 514.1V531.6M661.2 506.8V519.9M677.1 507.5V530.9M682.4 493.6V516.3M693.0 471.7V506.1M714.2 530.2V545.5M724.8 539.4V549.4M730.1 524.8V542.3M735.4 509.9V526.3M746.0 502.1V524.1M767.2 508.7V514.3M777.7 505.8V519.2M783.0 510.2V517.8M788.3 509.0V516.8M793.6 496.0V511.6M804.2 509.0V521.9M814.8 520.1V529.9M820.1 509.7V522.2M825.4 509.0V520.1M841.3 512.4V518.9M867.8 530.6V541.9M873.1 521.9V536.8M883.7 508.7V526.2M889.0 504.5V514.9M894.3 506.0V515.4M899.6 500.3V510.8M904.9 480.9V508.7M915.5 476.7V494.9M920.7 469.9V481.1M926.0 436.0V473.6M931.3 401.0V446.9M936.6 388.0V414.1M947.2 375.9V402.6M952.5 379.2V394.3M957.8 354.2V381.8M968.4 384.3V403.0M979.0 387.6V395.3M994.9 403.7V421.8M1010.8 415.2V449.6M1016.1 422.5V438.5M1021.4 417.7V427.7M1032.0 394.3V439.8M1037.3 390.2V413.6M1053.2 397.5V407.7M1058.5 397.2V405.5M1063.7 376.7V400.1M1069.0 372.6V381.7M1100.8 389.4V400.7M1106.1 379.2V394.9M1111.4 377.5V385.1M1116.7 361.2V380.7M1122.0 361.2V378.5M1127.3 357.3V376.7M1132.6 333.2V360.2M1159.1 386.5V397.2M1175.0 382.6V397.8M1190.9 391.6V401.6M1196.2 391.5V398.5M1201.5 380.5V396.6M1206.7 372.2V383.5M1212.0 362.0V380.5M1222.6 358.2V368.1M1243.8 381.0V395.9M1249.1 354.2V382.4M1254.4 301.6V361.5M1265.0 345.4V363.7M1286.2 382.4V394.1M1307.4 400.0V412.7M1312.7 389.3V401.0M1333.9 409.3V417.1M1339.2 409.0V417.8M1349.7 410.2V415.2M1355.0 405.8V411.2M1360.3 394.8V411.6M1370.9 403.6V407.2M1376.2 392.2V404.7M1381.5 386.8V398.9M1397.4 402.8V413.1M1408.0 403.6V413.2M1413.3 405.0V414.1M1418.6 392.6V411.2M1445.1 405.0V410.9M1450.4 396.3V409.4M1461.0 388.9V399.5M1466.3 350.9V393.3M1471.6 369.2V385.3M1476.9 355.3V375.8M1487.5 367.3V377.5M1492.7 342.9V368.8M1508.6 362.9V371.4M1513.9 357.5V367.4M1519.2 351.6V360.1M1524.5 339.9V356.3M1535.1 340.2V356.8M1540.4 319.2V345.1M1556.3 355.3V361.6M1561.6 352.8V362.6M1566.9 347.0V355.3M1572.2 345.1V352.8M1593.4 367.0V373.3M1609.3 372.1V379.4M1625.2 377.2V388.5M1635.7 367.4V382.3M1641.0 361.1V372.8M1646.3 357.2V370.4M1667.5 374.7V380.6M1672.8 374.3V381.2M1678.1 366.0V372.6M1683.4 366.8V371.9M1688.7 358.4V368.9M1704.6 371.1V376.0M1709.9 365.3V373.3M1715.2 353.6V369.7M1720.5 345.8V361.6M1731.1 352.1V359.4M1736.4 341.9V355.1M1741.7 339.7V352.9M1747.0 340.9V349.6M1757.6 336.8V347.3M1784.0 357.3V367.2M1789.3 354.6V361.9M1794.6 351.1V356.5M1805.2 346.7V358.4M1810.5 349.6V355.1M1821.1 353.2V355.5M1826.4 327.7V354.6M1831.7 317.0V333.1M1837.0 313.6V328.5M1842.3 270.9V324.9M1847.6 256.5V290.1M1852.9 234.8V268.0M1858.2 193.5V253.6" stroke="#26a69a" stroke-width="1" fill="none"/><path d="M563.5 526.5h4.7V532.4h-4.7zM568.8 516.3h4.7V527.3h-4.7zM590.0 537.5h4.7V540.4h-4.7zM611.2 558.0h4.7V563.1h-4.7zM621.8 547.7h4.7V568.2h-4.7zM627.1 543.3h4.7V548.5h-4.7zM637.7 539.7h4.7V547.7h-4.7zM643.0 532.4h4.7V540.4h-4.7zM648.3 530.2h4.7V533.1h-4.7zM653.6 518.5h4.7V530.9h-4.7zM658.9 513.4h4.7V519.2h-4.7zM674.8 514.8h4.7V530.2h-4.7zM680.1 497.3h4.7V515.6h-4.7zM690.7 476.8h4.7V505.3h-4.7zM711.8 530.9h4.7V544.8h-4.7zM722.4 540.9h4.7V547.9h-4.7zM727.7 526.3h4.7V541.6h-4.7zM733.0 511.9h4.7V526.0h-4.7zM743.6 503.6h4.7V523.3h-4.7zM764.8 511.3h4.7V513.8h-4.7zM775.4 515.3h4.7V518.9h-4.7zM780.7 513.8h4.7V516.8h-4.7zM786.0 510.6h4.7V513.8h-4.7zM791.3 498.8h4.7V510.9h-4.7zM801.9 514.9h4.7V519.7h-4.7zM812.5 521.1h4.7V527.0h-4.7zM817.8 518.2h4.7V521.9h-4.7zM823.1 510.9h4.7V518.2h-4.7zM839.0 513.1h4.7V517.2h-4.7zM865.4 536.1h4.7V540.9h-4.7zM870.7 522.2h4.7V536.5h-4.7zM881.3 514.3h4.7V525.8h-4.7zM886.6 513.3h4.7V514.5h-4.7zM891.9 509.1h4.7V514.5h-4.7zM897.2 501.2h4.7V510.1h-4.7zM902.5 485.1h4.7V501.8h-4.7zM913.1 479.9h4.7V492.8h-4.7zM918.4 472.2h4.7V480.3h-4.7zM923.7 446.1h4.7V473.2h-4.7zM929.0 402.2h4.7V446.5h-4.7zM934.3 401.0h4.7V402.6h-4.7zM944.9 387.6h4.7V402.2h-4.7zM950.2 380.1h4.7V388.0h-4.7zM955.5 354.6h4.7V380.7h-4.7zM966.1 384.9h4.7V395.3h-4.7zM976.7 389.7h4.7V394.7h-4.7zM992.5 415.2h4.7V419.3h-4.7zM1008.4 435.0h4.7V442.3h-4.7zM1013.7 426.0h4.7V435.6h-4.7zM1019.0 418.9h4.7V426.6h-4.7zM1029.6 404.3h4.7V426.6h-4.7zM1034.9 402.3h4.7V404.8h-4.7zM1050.8 399.7h4.7V406.3h-4.7zM1056.1 398.9h4.7V400.7h-4.7zM1061.4 378.8h4.7V399.7h-4.7zM1066.7 374.8h4.7V380.2h-4.7zM1098.5 393.8h4.7V400.1h-4.7zM1103.8 383.6h4.7V394.6h-4.7zM1109.1 377.7h4.7V384.3h-4.7zM1114.4 372.9h4.7V378.5h-4.7zM1119.7 371.9h4.7V373.8h-4.7zM1125.0 359.5h4.7V372.6h-4.7zM1130.3 354.4h4.7V359.8h-4.7zM1156.7 387.0h4.7V396.8h-4.7zM1172.6 382.9h4.7V393.1h-4.7zM1188.5 396.3h4.7V397.5h-4.7zM1193.8 392.7h4.7V398.1h-4.7zM1199.1 381.5h4.7V393.2h-4.7zM1204.4 379.1h4.7V382.7h-4.7zM1209.7 363.0h4.7V380.1h-4.7zM1220.3 363.0h4.7V365.2h-4.7zM1241.5 381.3h4.7V392.2h-4.7zM1246.8 360.1h4.7V382.0h-4.7zM1252.1 304.9h4.7V361.1h-4.7zM1262.7 352.3h4.7V363.4h-4.7zM1283.8 390.0h4.7V393.7h-4.7zM1305.0 400.3h4.7V412.3h-4.7zM1310.3 397.6h4.7V400.6h-4.7zM1331.5 414.2h4.7V416.6h-4.7zM1336.8 409.8h4.7V414.9h-4.7zM1347.4 410.5h4.7V414.9h-4.7zM1352.7 406.5h4.7V410.9h-4.7zM1358.0 399.5h4.7V410.1h-4.7zM1368.6 404.3h4.7V406.5h-4.7zM1373.9 397.7h4.7V404.3h-4.7zM1379.2 393.0h4.7V398.5h-4.7zM1395.1 405.8h4.7V407.2h-4.7zM1405.7 412.0h4.7V413.0h-4.7zM1411.0 406.8h4.7V412.6h-4.7zM1416.3 395.5h4.7V407.2h-4.7zM1442.7 405.8h4.7V410.6h-4.7zM1448.0 397.0h4.7V406.2h-4.7zM1458.6 389.7h4.7V398.9h-4.7zM1463.9 375.1h4.7V391.1h-4.7zM1469.2 373.2h4.7V376.1h-4.7zM1474.5 365.8h4.7V374.3h-4.7zM1485.1 367.7h4.7V375.1h-4.7zM1490.4 352.1h4.7V368.5h-4.7zM1506.3 366.3h4.7V370.2h-4.7zM1511.6 357.9h4.7V367.0h-4.7zM1516.9 355.3h4.7V358.9h-4.7zM1522.2 341.1h4.7V356.0h-4.7zM1532.8 344.0h4.7V356.0h-4.7zM1538.1 326.8h4.7V344.6h-4.7zM1554.0 356.8h4.7V358.2h-4.7zM1559.3 353.1h4.7V357.8h-4.7zM1564.5 352.4h4.7V353.8h-4.7zM1569.8 350.5h4.7V352.4h-4.7zM1591.0 367.3h4.7V371.8h-4.7zM1606.9 375.8h4.7V376.8h-4.7zM1622.8 377.7h4.7V385.6h-4.7zM1633.4 368.0h4.7V382.0h-4.7zM1638.7 367.4h4.7V368.6h-4.7zM1644.0 363.3h4.7V368.5h-4.7zM1665.2 376.5h4.7V378.0h-4.7zM1670.5 374.7h4.7V377.7h-4.7zM1675.8 368.2h4.7V371.9h-4.7zM1681.1 367.5h4.7V368.9h-4.7zM1686.4 360.9h4.7V368.2h-4.7zM1702.3 371.9h4.7V375.5h-4.7zM1707.5 366.0h4.7V372.6h-4.7zM1712.8 355.1h4.7V366.8h-4.7zM1718.1 347.0h4.7V355.8h-4.7zM1728.7 353.6h4.7V358.7h-4.7zM1734.0 346.3h4.7V354.3h-4.7zM1739.3 342.6h4.7V347.0h-4.7zM1744.6 341.9h4.7V343.4h-4.7zM1755.2 340.4h4.7V347.0h-4.7zM1781.7 360.9h4.7V367.0h-4.7zM1787.0 355.1h4.7V361.6h-4.7zM1792.3 351.4h4.7V356.1h-4.7zM1802.9 351.4h4.7V358.0h-4.7zM1808.2 350.7h4.7V352.1h-4.7zM1818.8 353.6h4.7V355.4h-4.7zM1824.1 331.7h4.7V354.3h-4.7zM1829.4 327.3h4.7V332.7h-4.7zM1834.7 317.0h4.7V328.0h-4.7zM1840.0 273.7h4.7V317.7h-4.7zM1845.3 264.1h4.7V275.2h-4.7zM1850.5 247.3h4.7V264.9h-4.7zM1855.8 202.4h4.7V248.0h-4.7z" fill="#26a69a"/>
<path d="M560.6 525.1V549.9M576.5 515.6V530.9M581.8 522.9V533.1M587.1 527.3V539.7M597.7 523.6V549.2M603.0 545.5V560.9M608.3 558.0V563.1M618.9 559.4V573.3M634.7 538.2V550.6M666.5 512.6V522.1M671.8 519.9V530.9M687.7 495.1V512.6M698.3 474.6V517.0M703.6 509.0V529.4M708.9 525.8V548.5M719.5 529.2V548.2M740.7 511.6V523.6M751.3 501.7V516.0M756.6 505.1V513.8M761.9 498.8V514.6M772.5 510.5V522.6M798.9 495.1V524.1M809.5 513.8V527.0M830.7 506.1V519.7M836.0 513.1V518.9M846.6 512.8V532.8M851.9 521.9V535.8M857.2 530.4V540.9M862.5 528.9V541.6M878.4 521.6V526.8M910.2 480.3V495.5M941.9 393.9V407.8M963.1 348.8V399.5M973.7 379.2V395.3M984.3 389.1V407.8M989.6 399.5V419.7M1000.2 414.7V431.9M1005.5 430.2V442.7M1026.7 418.3V431.9M1042.6 394.9V408.5M1047.9 403.6V416.8M1074.3 373.4V385.5M1079.6 382.1V387.5M1084.9 375.3V389.4M1090.2 383.6V398.9M1095.5 392.4V401.1M1137.9 353.9V378.5M1143.2 371.2V383.9M1148.5 373.4V394.3M1153.8 389.9V397.5M1164.4 384.3V396.3M1169.7 384.3V393.8M1180.3 378.2V390.5M1185.6 385.1V398.2M1217.3 352.7V365.5M1227.9 362.5V388.9M1233.2 385.4V394.1M1238.5 387.4V392.7M1259.7 304.1V365.9M1270.3 351.7V373.9M1275.6 373.7V385.6M1280.9 381.0V397.8M1291.5 385.4V405.8M1296.8 401.0V428.0M1302.1 406.8V416.6M1318.0 397.3V408.3M1323.3 400.3V416.1M1328.6 414.6V428.8M1344.5 404.4V415.2M1365.6 399.2V406.2M1386.8 392.6V405.0M1392.1 403.6V414.1M1402.7 405.8V413.5M1423.9 390.1V403.9M1429.2 399.9V407.2M1434.5 397.7V407.2M1439.8 405.8V411.2M1455.7 396.5V405.8M1482.2 361.2V376.5M1498.0 351.7V368.2M1503.3 360.9V374.6M1529.8 338.2V357.5M1545.7 326.1V343.2M1551.0 340.2V358.9M1577.5 348.0V365.1M1582.8 358.2V370.4M1588.1 369.2V375.8M1598.7 366.3V376.2M1604.0 372.1V385.0M1614.6 373.6V385.3M1619.9 380.9V391.1M1630.5 375.8V383.1M1651.6 362.2V368.9M1656.9 364.8V372.1M1662.2 370.9V379.7M1694.0 360.5V380.4M1699.3 374.1V382.8M1725.8 346.7V359.0M1752.3 338.5V349.2M1762.9 340.1V344.8M1768.2 341.2V354.6M1773.5 350.7V358.0M1778.7 352.9V367.2M1799.9 351.1V360.5M1815.8 350.7V356.5M1863.5 188.7V224.8M1868.8 200.0V226.4" stroke="#ef5350" stroke-width="1" fill="none"/><path d="M558.2 528.0h4.7V532.4h-4.7zM574.1 516.3h4.7V530.2h-4.7zM579.4 529.4h4.7V532.4h-4.7zM584.7 531.6h4.7V538.2h-4.7zM595.3 533.1h4.7V547.7h-4.7zM600.6 547.0h4.7V559.4h-4.7zM605.9 558.7h4.7V562.3h-4.7zM616.5 560.9h4.7V568.2h-4.7zM632.4 543.3h4.7V547.7h-4.7zM664.2 513.4h4.7V521.4h-4.7zM669.5 520.7h4.7V530.2h-4.7zM685.4 496.5h4.7V504.6h-4.7zM696.0 476.8h4.7V510.4h-4.7zM701.3 510.4h4.7V528.7h-4.7zM706.5 528.0h4.7V544.8h-4.7zM717.1 530.6h4.7V547.9h-4.7zM738.3 511.9h4.7V523.3h-4.7zM748.9 504.0h4.7V507.0h-4.7zM754.2 505.8h4.7V508.0h-4.7zM759.5 507.3h4.7V513.8h-4.7zM770.1 511.2h4.7V518.9h-4.7zM796.6 498.8h4.7V519.7h-4.7zM807.2 514.9h4.7V526.7h-4.7zM828.4 510.9h4.7V514.6h-4.7zM833.7 513.8h4.7V517.5h-4.7zM844.3 513.1h4.7V523.6h-4.7zM849.5 522.6h4.7V533.3h-4.7zM854.8 532.4h4.7V535.0h-4.7zM860.1 534.7h4.7V540.9h-4.7zM876.0 522.0h4.7V526.2h-4.7zM907.8 485.1h4.7V492.4h-4.7zM939.6 401.0h4.7V402.2h-4.7zM960.8 354.6h4.7V394.7h-4.7zM971.4 384.9h4.7V394.7h-4.7zM982.0 389.7h4.7V400.5h-4.7zM987.3 400.1h4.7V419.3h-4.7zM997.8 415.2h4.7V431.4h-4.7zM1003.1 430.8h4.7V442.3h-4.7zM1024.3 418.9h4.7V426.6h-4.7zM1040.2 402.3h4.7V404.8h-4.7zM1045.5 404.1h4.7V406.3h-4.7zM1072.0 374.8h4.7V385.1h-4.7zM1077.3 384.3h4.7V387.3h-4.7zM1082.6 386.1h4.7V387.5h-4.7zM1087.9 386.1h4.7V398.2h-4.7zM1093.2 396.8h4.7V400.1h-4.7zM1135.5 354.4h4.7V374.8h-4.7zM1140.8 374.8h4.7V377.7h-4.7zM1146.1 377.0h4.7V393.8h-4.7zM1151.4 393.1h4.7V396.8h-4.7zM1162.0 387.0h4.7V392.4h-4.7zM1167.3 391.2h4.7V392.7h-4.7zM1177.9 382.9h4.7V385.8h-4.7zM1183.2 385.5h4.7V397.8h-4.7zM1215.0 363.0h4.7V365.2h-4.7zM1225.6 363.0h4.7V386.4h-4.7zM1230.9 385.6h4.7V391.2h-4.7zM1236.2 390.3h4.7V392.2h-4.7zM1257.4 304.9h4.7V362.3h-4.7zM1268.0 351.7h4.7V373.7h-4.7zM1273.3 373.9h4.7V381.5h-4.7zM1278.5 381.3h4.7V393.7h-4.7zM1289.1 390.0h4.7V405.4h-4.7zM1294.4 404.4h4.7V408.7h-4.7zM1299.7 407.6h4.7V412.0h-4.7zM1315.6 397.6h4.7V407.9h-4.7zM1320.9 407.3h4.7V415.6h-4.7zM1326.2 414.9h4.7V416.6h-4.7zM1342.1 409.8h4.7V414.9h-4.7zM1363.3 399.5h4.7V405.8h-4.7zM1384.5 393.0h4.7V404.3h-4.7zM1389.8 404.3h4.7V407.7h-4.7zM1400.4 406.5h4.7V413.1h-4.7zM1421.5 395.5h4.7V403.6h-4.7zM1426.8 402.8h4.7V403.9h-4.7zM1432.1 403.6h4.7V406.8h-4.7zM1437.4 406.5h4.7V410.6h-4.7zM1453.3 397.0h4.7V398.9h-4.7zM1479.8 365.8h4.7V375.1h-4.7zM1495.7 352.1h4.7V367.7h-4.7zM1501.0 367.3h4.7V371.1h-4.7zM1527.5 341.1h4.7V356.3h-4.7zM1543.4 326.8h4.7V342.9h-4.7zM1548.7 342.1h4.7V358.2h-4.7zM1575.1 350.5h4.7V360.7h-4.7zM1580.4 360.1h4.7V369.9h-4.7zM1585.7 369.5h4.7V371.8h-4.7zM1596.3 367.3h4.7V375.8h-4.7zM1601.6 375.0h4.7V376.5h-4.7zM1612.2 376.5h4.7V383.1h-4.7zM1617.5 382.3h4.7V385.6h-4.7zM1628.1 377.7h4.7V382.0h-4.7zM1649.3 363.3h4.7V366.3h-4.7zM1654.6 365.5h4.7V371.4h-4.7zM1659.9 371.4h4.7V378.2h-4.7zM1691.7 360.9h4.7V375.5h-4.7zM1697.0 374.5h4.7V375.7h-4.7zM1723.4 347.0h4.7V358.7h-4.7zM1749.9 341.9h4.7V347.3h-4.7zM1760.5 340.4h4.7V341.9h-4.7zM1765.8 341.5h4.7V352.1h-4.7zM1771.1 352.1h4.7V353.6h-4.7zM1776.4 353.2h4.7V367.0h-4.7zM1797.6 351.4h4.7V358.0h-4.7zM1813.5 351.1h4.7V355.1h-4.7zM1861.1 202.4h4.7V211.3h-4.7zM1866.4 211.3h4.7V220.9h-4.7z" fill="#ef5350"/>
<path d="M930.9 398.6l4 4-4 4-4-4z" fill="#e0a92e" fill-opacity="0.9"/>
<path d="M962.7 391.3l4 4-4 4-4-4z" fill="#e0a92e" fill-opacity="0.9"/>
<path d="M1852.9 242.8l4 4-4 4-4-4z" fill="#e0a92e" fill-opacity="0.9"/>
<path d="M1858.2 198.9l4 4-4 4-4-4z" fill="#e0a92e" fill-opacity="0.9"/>
<polyline points="560.6,537.0 565.9,534.7 571.2,530.6 576.5,530.5 581.8,530.9 587.1,532.5 592.4,533.6 597.7,536.8 603.0,541.8 608.3,546.4 613.6,548.9 618.9,553.2 624.2,552.0 629.5,550.1 634.7,549.5 640.0,547.4 645.3,544.0 650.6,540.9 655.9,536.0 661.2,530.9 666.5,528.8 671.8,529.1 677.1,525.9 682.4,519.6 687.7,516.2 693.0,507.5 698.3,508.1 703.6,512.7 708.9,519.8 714.2,522.3 719.5,528.0 724.8,530.9 730.1,529.8 735.4,525.9 740.7,525.3 746.0,520.5 751.3,517.5 756.6,515.4 761.9,515.0 767.2,514.2 772.5,515.3 777.7,515.3 783.0,514.9 788.3,514.0 793.6,510.6 798.9,512.6 804.2,513.1 809.5,516.1 814.8,517.2 820.1,517.5 825.4,516.0 830.7,515.7 836.0,516.1 841.3,515.4 846.6,517.2 851.9,520.8 857.2,524.0 862.5,527.7 867.8,529.6 873.1,527.9 878.4,527.5 883.7,524.6 889.0,522.1 894.3,519.2 899.6,515.2 904.9,508.5 910.2,504.9 915.5,499.4 920.7,493.3 926.0,482.8 931.3,464.9 936.6,450.7 941.9,439.9 947.2,428.3 952.5,417.6 957.8,403.6 963.1,401.6 968.4,397.9 973.7,397.2 979.0,395.5 984.3,396.6 989.6,401.7 994.9,404.7 1000.2,410.6 1005.5,417.7 1010.8,421.5 1016.1,422.5 1021.4,421.7 1026.7,422.8 1032.0,418.7 1037.3,415.1 1042.6,412.8 1047.9,411.3 1053.2,408.7 1058.5,406.6 1063.7,400.4 1069.0,394.7 1074.3,392.6 1079.6,391.4 1084.9,390.5 1090.2,392.2 1095.5,394.0 1100.8,394.0 1106.1,391.7 1111.4,388.6 1116.7,385.1 1122.0,382.2 1127.3,377.1 1132.6,372.1 1137.9,372.7 1143.2,373.8 1148.5,378.3 1153.8,382.4 1159.1,383.4 1164.4,385.4 1169.7,387.0 1175.0,386.1 1180.3,386.0 1185.6,388.6 1190.9,390.3 1196.2,390.9 1201.5,388.8 1206.7,386.6 1212.0,381.4 1217.3,377.8 1222.6,374.5 1227.9,377.1 1233.2,380.3 1238.5,382.9 1243.8,382.5 1249.1,377.5 1254.4,361.4 1259.7,361.6 1265.0,359.5 1270.3,362.7 1275.6,366.9 1280.9,372.8 1286.2,376.6 1291.5,383.0 1296.8,388.7 1302.1,393.9 1307.4,395.3 1312.7,395.8 1318.0,398.5 1323.3,402.3 1328.6,405.5 1333.9,407.4 1339.2,407.9 1344.5,409.5 1349.7,409.7 1355.0,409.0 1360.3,406.9 1365.6,406.6 1370.9,406.1 1376.2,404.2 1381.5,401.8 1386.8,402.3 1392.1,403.5 1397.4,404.0 1402.7,406.0 1408.0,407.4 1413.3,407.2 1418.6,404.6 1423.9,404.4 1429.2,404.3 1434.5,404.8 1439.8,406.1 1445.1,406.0 1450.4,404.0 1455.7,402.9 1461.0,399.9 1466.3,394.4 1471.6,389.7 1476.9,384.4 1482.2,382.3 1487.5,379.1 1492.7,373.1 1498.0,371.9 1503.3,371.7 1508.6,370.5 1513.9,367.7 1519.2,365.0 1524.5,359.7 1529.8,358.9 1535.1,355.6 1540.4,349.2 1545.7,347.8 1551.0,350.1 1556.3,351.6 1561.6,351.9 1566.9,352.0 1572.2,351.7 1577.5,353.7 1582.8,357.3 1588.1,360.5 1593.4,362.0 1598.7,365.1 1604.0,367.6 1609.3,369.4 1614.6,372.5 1619.9,375.4 1625.2,375.9 1630.5,377.2 1635.7,375.2 1641.0,373.5 1646.3,371.2 1651.6,370.1 1656.9,370.4 1662.2,372.1 1667.5,373.1 1672.8,373.5 1678.1,372.3 1683.4,371.2 1688.7,368.9 1694.0,370.4 1699.3,371.6 1704.6,371.6 1709.9,370.4 1715.2,367.0 1720.5,362.5 1725.8,361.7 1731.1,359.9 1736.4,356.9 1741.7,353.7 1747.0,351.1 1752.3,350.2 1757.6,348.1 1762.9,346.7 1768.2,347.9 1773.5,349.2 1778.7,353.1 1784.0,354.9 1789.3,354.9 1794.6,354.1 1799.9,355.0 1805.2,354.2 1810.5,353.4 1815.8,353.8 1821.1,353.7 1826.4,348.8 1831.7,344.0 1837.0,338.0 1842.3,323.7 1847.6,310.5 1852.9,296.5 1858.2,275.6 1863.5,261.3 1868.8,252.3" fill="none" stroke="#7a1fa2" stroke-width="2" stroke-linejoin="round"/>
<polyline points="560.5,675.1 576.9,668.5 598.8,662.4 622.9,654.7 642.7,651.0 664.6,642.6 686.5,636.7 697.5,633.4 708.4,631.2 730.3,628.6 752.3,625.8 774.2,622.5 796.1,618.5 818.0,615.9 841.0,613.0 855.0,605.8 871.7,600.6 896.8,596.4 917.6,590.8 923.9,587.0 934.3,578.7 946.9,572.0 957.3,566.2 962.5,552.6 969.8,543.2 980.3,531.7 990.7,522.3 999.1,515.0 1015.8,505.6 1028.3,497.3 1042.9,492.0 1053.4,490.0 1063.8,486.4 1076.3,480.6 1088.9,476.4 1105.6,472.6 1116.0,470.1 1126.5,465.5 1139.0,458.6 1153.6,451.3 1168.2,447.1 1184.9,442.6 1199.5,439.8 1214.7,435.1 1224.2,431.7 1238.9,428.0 1248.4,425.8 1254.9,420.0 1262.3,416.6 1270.3,415.6 1282.7,413.1 1297.3,411.2 1312.0,409.5 1326.6,407.9 1341.2,406.8 1355.1,406.0 1369.6,403.9 1384.2,401.4 1398.9,399.2 1413.5,397.0 1428.1,394.5 1442.7,392.6 1450.0,391.6 1457.3,388.9 1464.6,386.8 1479.3,385.7 1486.6,386.5 1501.2,386.3 1515.0,386.0 1534.0,383.1 1541.3,380.6 1558.9,378.7 1573.5,377.7 1588.1,376.9 1602.7,376.5 1632.0,376.5 1653.9,376.5 1661.2,377.7 1675.0,377.7 1704.2,376.3 1733.5,374.8 1762.7,374.1 1778.8,373.6 1783.2,376.3 1789.0,378.2 1799.3,378.9 1821.2,377.7 1828.5,374.8 1836.8,372.2 1844.1,364.5 1851.3,352.5 1858.5,338.1 1863.7,328.5 1868.8,325.6" fill="none" stroke="#fff53d" stroke-width="2" stroke-linejoin="round"/>
<polyline points="560.6,734.3 565.9,732.8 571.2,731.3 576.5,737.9 581.8,739.7 587.1,742.7 592.4,741.1 597.7,748.2 603.0,752.5 608.3,755.2 613.6,753.3 618.9,757.4 624.2,749.9 629.5,748.6 634.7,751.1 640.0,747.9 645.3,745.2 650.6,744.5 655.9,740.8 661.2,739.1 666.5,743.8 671.8,749.6 677.1,744.1 682.4,738.7 687.7,743.0 693.0,736.2 698.3,751.1 703.6,757.4 708.9,763.1 714.2,758.4 719.5,763.8 724.8,761.6 730.1,756.9 735.4,752.5 740.7,756.5 746.0,750.8 751.3,751.4 756.6,751.8 761.9,755.0 767.2,754.0 772.5,756.9 777.7,756.5 783.0,755.2 788.3,753.7 793.6,748.9 798.9,758.7 804.2,756.9 809.5,762.3 814.8,759.8 820.1,757.2 825.4,755.0 830.7,757.7 836.0,758.4 841.3,756.5 846.6,761.6 851.9,766.4 857.2,767.4 862.5,770.5 867.8,767.4 873.1,758.7 878.4,760.6 883.7,754.4 889.0,754.4 894.3,752.2 899.6,748.2 904.9,740.8 910.2,746.0 915.5,741.1 920.7,738.7 926.0,731.3 931.3,724.0 936.6,724.0 941.9,724.0 947.2,721.8 952.5,720.8 957.8,718.5 963.1,739.4 968.4,737.2 973.7,741.1 979.0,740.1 984.3,744.9 989.6,752.5 994.9,751.4 1000.2,757.2 1005.5,761.3 1010.8,758.7 1016.1,755.5 1021.4,753.0 1026.7,756.5 1032.0,749.2 1037.3,748.9 1042.6,749.9 1047.9,750.3 1053.2,748.2 1058.5,748.2 1063.7,741.1 1069.0,739.8 1074.3,745.5 1079.6,746.7 1084.9,746.7 1090.2,752.8 1095.5,754.4 1100.8,751.8 1106.1,747.1 1111.4,744.8 1116.7,743.0 1122.0,742.7 1127.3,737.6 1132.6,735.7 1137.9,749.6 1143.2,751.8 1148.5,760.3 1153.8,762.0 1159.1,756.9 1164.4,759.4 1169.7,760.6 1175.0,754.7 1180.3,756.5 1185.6,763.2 1190.9,763.2 1196.2,760.6 1201.5,754.0 1206.7,752.5 1212.0,744.8 1217.3,745.5 1222.6,744.8 1227.9,760.3 1233.2,762.8 1238.5,763.8 1243.8,756.9 1249.1,747.1 1254.4,732.5 1259.7,755.8 1265.0,752.5 1270.3,759.8 1275.6,761.3 1280.9,765.0 1286.2,763.8 1291.5,767.4 1296.8,768.6 1302.1,769.6 1307.4,765.0 1312.7,763.9 1318.0,766.9 1323.3,769.3 1328.6,769.8 1333.9,768.9 1339.2,766.9 1344.5,768.9 1349.7,766.0 1355.0,765.7 1360.3,760.6 1365.6,764.2 1370.9,762.5 1376.2,759.4 1381.5,756.5 1386.8,762.8 1392.1,764.2 1397.4,763.9 1402.7,767.2 1408.0,767.2 1413.3,762.5 1418.6,755.5 1423.9,760.9 1429.2,760.6 1434.5,762.8 1439.8,765.3 1445.1,761.7 1450.4,755.5 1455.7,756.9 1461.0,751.8 1466.3,743.5 1471.6,742.3 1476.9,739.4 1482.2,746.3 1487.5,743.0 1492.7,736.8 1498.0,747.7 1503.3,750.6 1508.6,748.2 1513.9,744.1 1519.2,743.5 1524.5,737.6 1529.8,748.4 1535.1,743.0 1540.4,737.6 1545.7,746.7 1551.0,755.0 1556.3,755.0 1561.6,752.8 1566.9,752.1 1572.2,751.5 1577.5,757.2 1582.8,762.5 1588.1,763.5 1593.4,760.6 1598.7,765.4 1604.0,766.1 1609.3,765.4 1614.6,768.9 1619.9,770.8 1625.2,763.8 1630.5,767.2 1635.7,757.7 1641.0,757.9 1646.3,754.7 1651.6,756.2 1656.9,760.6 1662.2,765.0 1667.5,765.3 1672.8,761.6 1678.1,757.7 1683.4,756.9 1688.7,752.2 1694.0,763.5 1699.3,763.5 1704.6,760.6 1709.9,755.8 1715.2,748.9 1720.5,744.5 1725.8,753.3 1731.1,751.1 1736.4,747.4 1741.7,744.5 1747.0,744.1 1752.3,748.4 1757.6,744.8 1762.9,746.3 1768.2,755.5 1773.5,756.5 1778.7,766.0 1784.0,762.0 1789.3,758.1 1794.6,754.7 1799.9,759.4 1805.2,755.0 1810.5,755.0 1815.8,758.1 1821.1,757.2 1826.4,743.3 1831.7,740.8 1837.0,736.8 1842.3,725.2 1847.6,723.6 1852.9,720.8 1858.2,716.0 1863.5,721.4 1868.8,726.7" fill="none" stroke="#e6139a" stroke-width="2" stroke-linejoin="round"/>
<line x1="558.5" y1="771.5" x2="1885" y2="771.5" stroke="#b9b8ce" stroke-width="1"/>
<line x1="1270.5" y1="180" x2="1270.5" y2="695" stroke="#d4d4d4" stroke-width="1" stroke-dasharray="4 2"/>
<line x1="1270.5" y1="628" x2="1270.5" y2="708" stroke="#d4d4d4" stroke-width="1" stroke-dasharray="4 2" stroke-dashoffset="3"/>
<line x1="1270.5" y1="629" x2="1270.5" y2="708" stroke="#d4d4d4" stroke-width="1" stroke-opacity="0.55"/>
<line x1="1270.5" y1="714.5" x2="1270.5" y2="771.5" stroke="#d4d4d4" stroke-width="1" stroke-dasharray="4 2"/>
<line x1="559" y1="514.5" x2="1885" y2="514.5" stroke="#d4d4d4" stroke-width="1" stroke-dasharray="4 2"/>
<circle cx="1270.4" cy="415.6" r="2.6" fill="#fffbd0" stroke="#fff53d" stroke-width="1.6"/>
<circle cx="1270.4" cy="759.8" r="2.6" fill="#e6139a"/>
<rect x="481" y="503" width="75" height="22" rx="3" fill="#757575"/>
<text x="548.8" y="516.9" text-anchor="end" fill="#f4f4f4">61,827.41</text>
<clipPath id="slc"><rect x="562.5" y="787.5" width="1324.3" height="29.5" rx="3"/></clipPath>
<polygon clip-path="url(#slc)" points="562.5,817 563.3,796.1 602.3,795.4 623.6,794.5 628.3,793.5 649.6,794.9 696.9,795.9 720.6,794.9 756.1,794.2 782.1,794.9 793.9,796.8 815.2,796.1 831.8,798.5 857.8,798.9 886.2,798.2 909.9,798.0 914.6,799.7 920.5,797.3 945.3,796.8 961.9,797.8 980.8,796.8 992.7,794.0 1005.0,793.0 1012.1,793.7 1016.8,795.4 1028.7,794.9 1045.2,796.1 1064.1,795.9 1073.6,798.9 1099.6,800.8 1111.5,800.8 1117.4,802.5 1122.1,800.4 1135.1,803.0 1158.8,803.4 1168.2,804.4 1180.1,803.4 1186.0,802.0 1194.3,802.5 1206.1,803.4 1217.9,804.9 1229.7,803.4 1243.9,803.4 1254.6,804.4 1260.5,808.6 1270.0,811.0 1279.4,810.3 1284.2,810.8 1298.4,808.4 1312.5,810.1 1331.5,811.0 1340.9,811.0 1350.4,807.9 1354.7,805.6 1359.9,809.8 1367.0,810.5 1383.5,809.1 1396.5,807.2 1411.9,810.8 1430.8,809.8 1452.1,809.6 1452.0,809.6 1482.8,809.1 1499.3,806.3 1513.5,807.2 1525.3,805.6 1546.6,806.0 1565.6,805.6 1572.7,806.8 1579.8,805.6 1601.0,806.3 1622.3,804.4 1641.3,805.1 1660.2,806.0 1676.7,805.1 1688.6,806.0 1698.0,805.6 1702.8,802.0 1712.2,799.7 1728.8,800.1 1740.6,799.2 1757.2,799.7 1766.6,797.3 1783.2,797.3 1806.9,796.3 1821.1,797.3 1842.3,796.3 1866.0,796.8 1875.5,796.1 1886.8,797.8 1886.8,817" fill="#25252c"/>
<polyline points="563.3,796.1 602.3,795.4 623.6,794.5 628.3,793.5 649.6,794.9 696.9,795.9 720.6,794.9 756.1,794.2 782.1,794.9 793.9,796.8 815.2,796.1 831.8,798.5 857.8,798.9 886.2,798.2 909.9,798.0 914.6,799.7 920.5,797.3 945.3,796.8 961.9,797.8 980.8,796.8 992.7,794.0 1005.0,793.0 1012.1,793.7 1016.8,795.4 1028.7,794.9 1045.2,796.1 1064.1,795.9 1073.6,798.9 1099.6,800.8 1111.5,800.8 1117.4,802.5 1122.1,800.4 1135.1,803.0 1158.8,803.4 1168.2,804.4 1180.1,803.4 1186.0,802.0 1194.3,802.5 1206.1,803.4 1217.9,804.9 1229.7,803.4 1243.9,803.4 1254.6,804.4 1260.5,808.6 1270.0,811.0 1279.4,810.3 1284.2,810.8 1298.4,808.4 1312.5,810.1 1331.5,811.0 1340.9,811.0 1350.4,807.9 1354.7,805.6 1359.9,809.8 1367.0,810.5 1383.5,809.1 1396.5,807.2 1411.9,810.8 1430.8,809.8 1452.1,809.6 1452.0,809.6 1482.8,809.1 1499.3,806.3 1513.5,807.2 1525.3,805.6 1546.6,806.0 1565.6,805.6 1572.7,806.8 1579.8,805.6 1601.0,806.3 1622.3,804.4 1641.3,805.1 1660.2,806.0 1676.7,805.1 1688.6,806.0 1698.0,805.6 1702.8,802.0 1712.2,799.7 1728.8,800.1 1740.6,799.2 1757.2,799.7 1766.6,797.3 1783.2,797.3 1806.9,796.3 1821.1,797.3 1842.3,796.3 1866.0,796.8 1875.5,796.1 1886.8,797.8" fill="none" stroke="#63627a" stroke-width="1"/>
<rect x="1715.8" y="787.5" width="171.0" height="29.5" fill="rgb(140,172,205)" fill-opacity="0.25"/>
<polyline points="1728.8,800.1 1740.6,799.2 1757.2,799.7 1766.6,797.3 1783.2,797.3 1806.9,796.3 1821.1,797.3 1842.3,796.3 1866.0,796.8 1875.5,796.1 1886.8,797.8" fill="none" stroke="#7f9cc0" stroke-width="1"/>
<rect x="562.5" y="787.5" width="1324.3" height="29.5" rx="3" fill="none" stroke="#484859" stroke-width="1.8"/>
<rect x="1715.5" y="781.3" width="172" height="6" rx="1" fill="#4a4a4a"/>
<path d="M1798.4 782.6v3.4M1800.2 782.6v3.4M1802 782.6v3.4M1803.8 782.3v4" stroke="#ddd" stroke-width="0.9" fill="none"/>
<circle cx="1715.8" cy="802" r="12" fill="#2f2f4f" stroke="#d2d2ea" stroke-width="1.2"/>
<rect x="1711.2" y="797.8" width="2.6" height="8.4" rx="0.6" fill="#8f8fa8" stroke="#e4e4f2" stroke-width="1"/><rect x="1717.8" y="797.8" width="2.6" height="8.4" rx="0.6" fill="#8f8fa8" stroke="#e4e4f2" stroke-width="1"/>
<circle cx="1886.8" cy="802" r="12" fill="#2f2f4f" stroke="#d2d2ea" stroke-width="1.2"/>
<rect x="1882.2" y="797.8" width="2.6" height="8.4" rx="0.6" fill="#8f8fa8" stroke="#e4e4f2" stroke-width="1"/><rect x="1888.8" y="797.8" width="2.6" height="8.4" rx="0.6" fill="#8f8fa8" stroke="#e4e4f2" stroke-width="1"/>
<rect x="1880.3" y="801.5" width="20" height="20.5" fill="#6b6b6b"/>
<path d="M1891.5 817.5h4.5v-4.5" fill="none" stroke="#8a8a8a" stroke-width="1.2"/>
</svg>
<div style="position:absolute;left:70.2px;top:68.1px;width:279.8px;height:412px;background:rgba(80,80,80,.7);border-radius:4px;box-shadow:1px 2px 10px rgba(0,0,0,.2)"></div>
<span class="t" style="left:80.2px;top:78.66px;font-size:14px;color:#fff;">2024-05-04 03:40:00</span>
<span class="t" style="left:80.2px;top:144.66px;font-size:14px;color:#fff;">2024-05-04 03:40:00</span>
<span class="t" style="left:80.2px;top:210.66px;font-size:14px;color:#fff;">2024-05-04 03:40:00</span>
<span style="position:absolute;left:80.1px;top:103.9px;width:10px;height:10px;border-radius:50%;background:#d10d8c"></span>
<span class="t" style="left:97.9px;top:100.66px;font-size:14px;color:#fff;">rsi</span>
<span class="t" style="right:1078.7px;top:100.66px;font-size:14px;color:#fff;font-weight:bold;">50.22577020190704</span>
<span style="position:absolute;left:80.1px;top:169.9px;width:10px;height:10px;border-radius:50%;background:#808080"></span>
<span class="t" style="left:97.9px;top:166.66px;font-size:14px;color:#fff;">Volume</span>
<span class="t" style="right:1078.7px;top:166.66px;font-size:14px;color:#fff;font-weight:bold;">118.66598</span>
<span style="position:absolute;left:80.1px;top:235.9px;width:10px;height:10px;border-radius:50%;background:#ef5350"></span>
<span class="t" style="left:97.9px;top:232.66px;font-size:14px;color:#fff;">Candles</span>
<span style="position:absolute;left:80.2px;top:260.8px;width:4px;height:4px;border-radius:50%;background:#ef5350"></span>
<span class="t" style="left:92.0px;top:254.66px;font-size:14px;color:#fff;">open</span>
<span class="t" style="right:1078.7px;top:254.66px;font-size:14px;color:#fff;font-weight:bold;">63,173.98</span>
<span style="position:absolute;left:80.2px;top:282.8px;width:4px;height:4px;border-radius:50%;background:#ef5350"></span>
<span class="t" style="left:92.0px;top:276.66px;font-size:14px;color:#fff;">highest</span>
<span class="t" style="right:1078.7px;top:276.66px;font-size:14px;color:#fff;font-weight:bold;">63,173.99</span>
<span style="position:absolute;left:80.2px;top:304.8px;width:4px;height:4px;border-radius:50%;background:#ef5350"></span>
<span class="t" style="left:92.0px;top:298.66px;font-size:14px;color:#fff;">lowest</span>
<span class="t" style="right:1078.7px;top:298.66px;font-size:14px;color:#fff;font-weight:bold;">62,976.02</span>
<span style="position:absolute;left:80.2px;top:326.8px;width:4px;height:4px;border-radius:50%;background:#ef5350"></span>
<span class="t" style="left:92.0px;top:320.66px;font-size:14px;color:#fff;">close</span>
<span class="t" style="right:1078.7px;top:320.66px;font-size:14px;color:#fff;font-weight:bold;">62,990.96</span>
<span style="position:absolute;left:80.1px;top:345.9px;width:10px;height:10px;border-radius:50%;background:#00ff26"></span>
<span class="t" style="left:97.9px;top:342.66px;font-size:14px;color:#fff;">Entry</span>
<span class="t" style="right:1078.7px;top:342.66px;font-size:14px;color:#fff;font-weight:bold;">-</span>
<span style="position:absolute;left:80.1px;top:367.9px;width:10px;height:10px;border-radius:50%;background:#fbb126"></span>
<span class="t" style="left:97.9px;top:364.66px;font-size:14px;color:#fff;">Exit</span>
<span class="t" style="right:1078.7px;top:364.66px;font-size:14px;color:#fff;font-weight:bold;">-</span>
<span style="position:absolute;left:80.1px;top:389.9px;width:10px;height:10px;border-radius:50%;background:#00ff26"></span>
<span class="t" style="left:97.9px;top:386.66px;font-size:14px;color:#fff;">Entry</span>
<span class="t" style="right:1078.7px;top:386.66px;font-size:14px;color:#fff;font-weight:bold;">-</span>
<span style="position:absolute;left:80.1px;top:411.9px;width:10px;height:10px;border-radius:50%;background:#fbb126"></span>
<span class="t" style="left:97.9px;top:408.66px;font-size:14px;color:#fff;">Exit</span>
<span class="t" style="right:1078.7px;top:408.66px;font-size:14px;color:#fff;font-weight:bold;">-</span>
<span style="position:absolute;left:80.1px;top:433.9px;width:10px;height:10px;border-radius:50%;background:#5b1782"></span>
<span class="t" style="left:97.9px;top:430.66px;font-size:14px;color:#fff;">ema_8</span>
<span class="t" style="right:1078.7px;top:430.66px;font-size:14px;color:#fff;font-weight:bold;">63,085.948152171906</span>
<span style="position:absolute;left:80.1px;top:455.9px;width:10px;height:10px;border-radius:50%;background:#fff53d"></span>
<span class="t" style="left:97.9px;top:452.66px;font-size:14px;color:#fff;">rvwap</span>
<span class="t" style="right:1078.7px;top:452.66px;font-size:14px;color:#fff;font-weight:bold;">62,648.75785661418</span>
</div>
</body>
</html>
